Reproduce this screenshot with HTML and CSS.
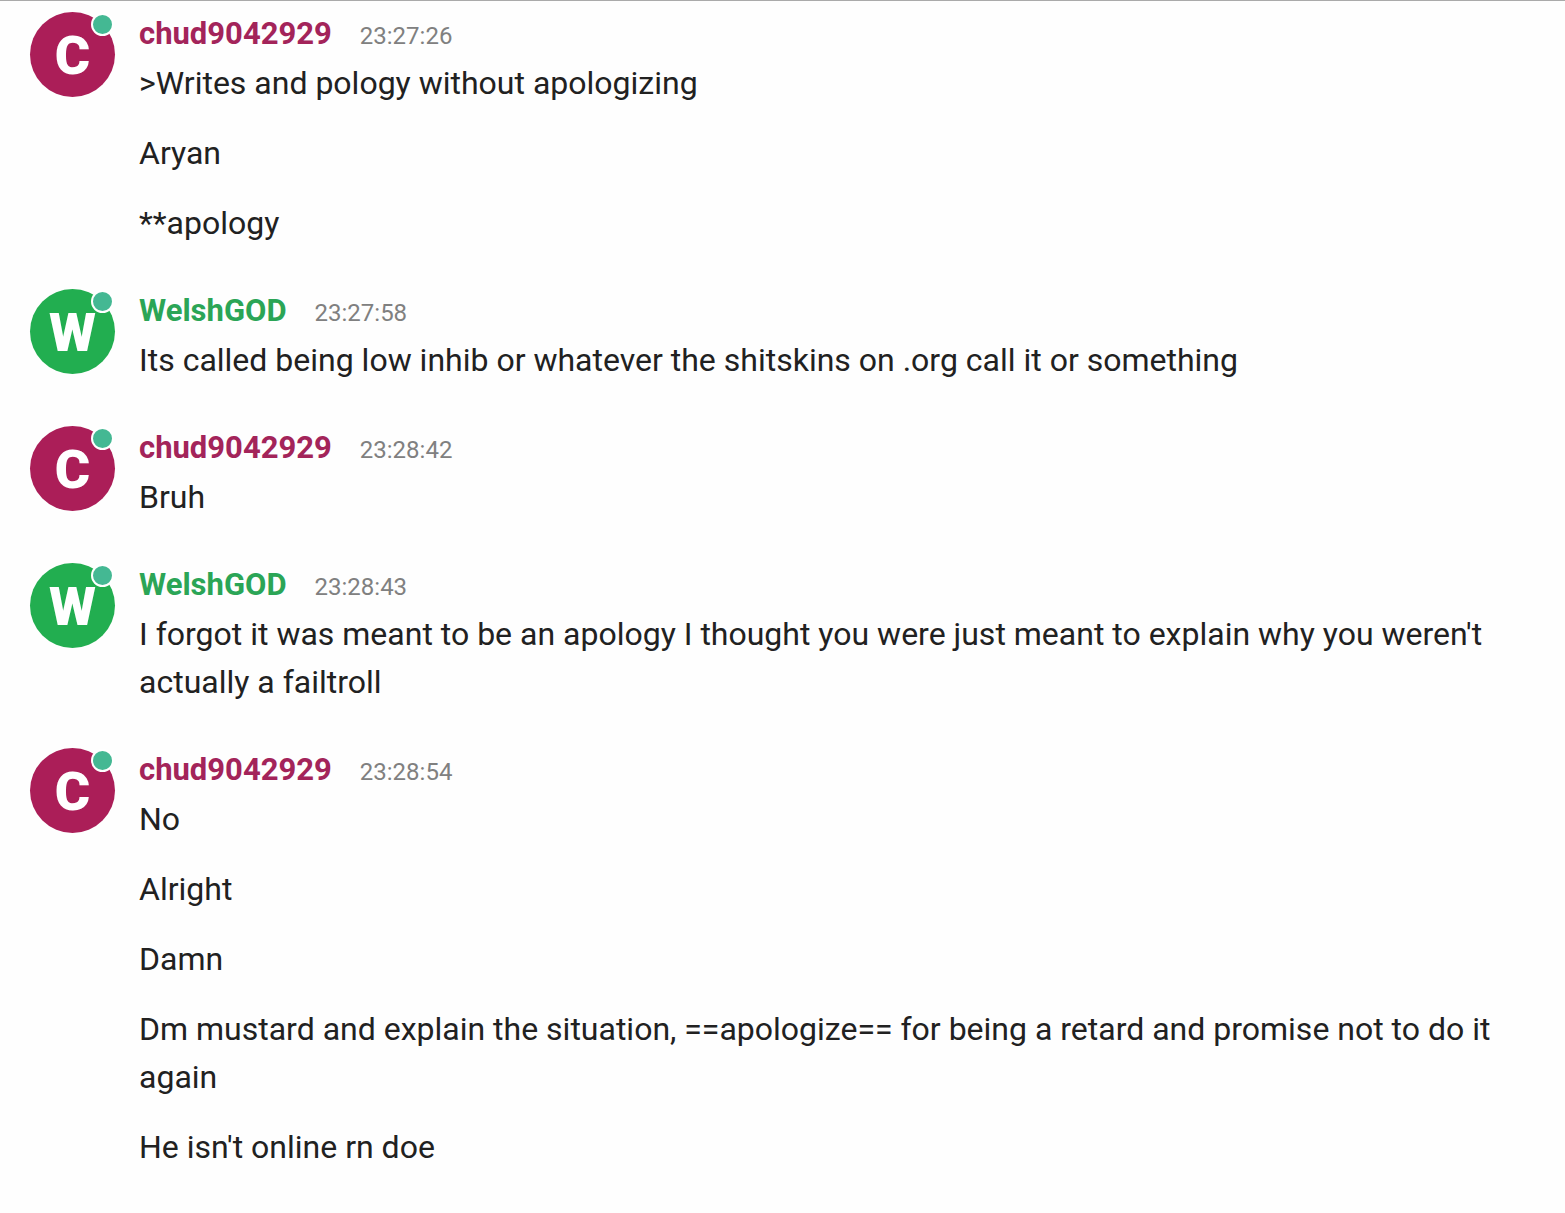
FILE: index.html
```
<!DOCTYPE html>
<html lang="en">
<head>
    <meta charset="UTF-8">
    <meta name="viewport" content="width=device-width, initial-scale=1.0">
    <title>Chat</title>
    <link rel="stylesheet" href="styles.css">
</head>
<body>
    <main class="chat">
        <article class="message chud">
            <div class="avatar">C<span class="status"></span></div>
            <div class="content">
                <header><span class="name">chud9042929</span><time>23:27:26</time></header>
                <p>&gt;Writes and pology without apologizing</p>
                <p>Aryan</p>
                <p>**apology</p>
            </div>
        </article>
        <article class="message welsh">
            <div class="avatar">W<span class="status"></span></div>
            <div class="content">
                <header><span class="name">WelshGOD</span><time>23:27:58</time></header>
                <p>Its called being low inhib or whatever the shitskins on .org call it or something</p>
            </div>
        </article>
        <article class="message chud">
            <div class="avatar">C<span class="status"></span></div>
            <div class="content">
                <header><span class="name">chud9042929</span><time>23:28:42</time></header>
                <p>Bruh</p>
            </div>
        </article>
        <article class="message welsh">
            <div class="avatar">W<span class="status"></span></div>
            <div class="content">
                <header><span class="name">WelshGOD</span><time>23:28:43</time></header>
                <p>I forgot it was meant to be an apology I thought you were just meant to explain why you weren't actually a failtroll</p>
            </div>
        </article>
        <article class="message chud">
            <div class="avatar">C<span class="status"></span></div>
            <div class="content">
                <header><span class="name">chud9042929</span><time>23:28:54</time></header>
                <p>No</p>
                <p>Alright</p>
                <p>Damn</p>
                <p>Dm mustard and explain the situation, ==apologize== for being a retard and promise not to do it again</p>
                <p>He isn't online rn doe</p>
            </div>
        </article>
    </main>
</body>
</html>
```
FILE: styles.css
```
body {
    margin: 0;
    background: #fefefe;
    color: #212121;
    font-family: Roboto, sans-serif;
    font-size: 32px;
    line-height: 48px;
}
.chat {
    border-top: 1px solid #aaa;
    padding: 11px 30px 0;
}
.message {
    display: flex;
    gap: 24px;
    margin-bottom: 42px;
}
.avatar {
    position: relative;
    flex: none;
    width: 85px;
    height: 85px;
    border-radius: 50%;
    color: #fff;
    font-size: 54px;
    font-weight: 900;
    line-height: 87px;
    text-align: center;
}
/* online dot on the avatar's corner */
.status {
    position: absolute;
    top: 1px;
    right: 1px;
    width: 19px;
    height: 19px;
    border: 2px solid #fff;
    border-radius: 50%;
    background: #44b893;
}
.content {
    flex: 1;
}
.content header {
    display: flex;
    align-items: baseline;
    gap: 28px;
    height: 47px;
    line-height: 44px;
}
.content p {
    margin: 0 0 22px;
}
.content p:last-child {
    margin-bottom: 0;
}
.name {
    font-size: 31px;
    font-weight: bold;
}
time {
    color: #808080;
    font-size: 24px;
}
.chud .avatar {
    background: #ab1e58;
}
.chud .name {
    color: #a3245a;
}
.welsh .avatar {
    background: #22ae50;
}
.welsh .name {
    color: #2ba556;
}
```
